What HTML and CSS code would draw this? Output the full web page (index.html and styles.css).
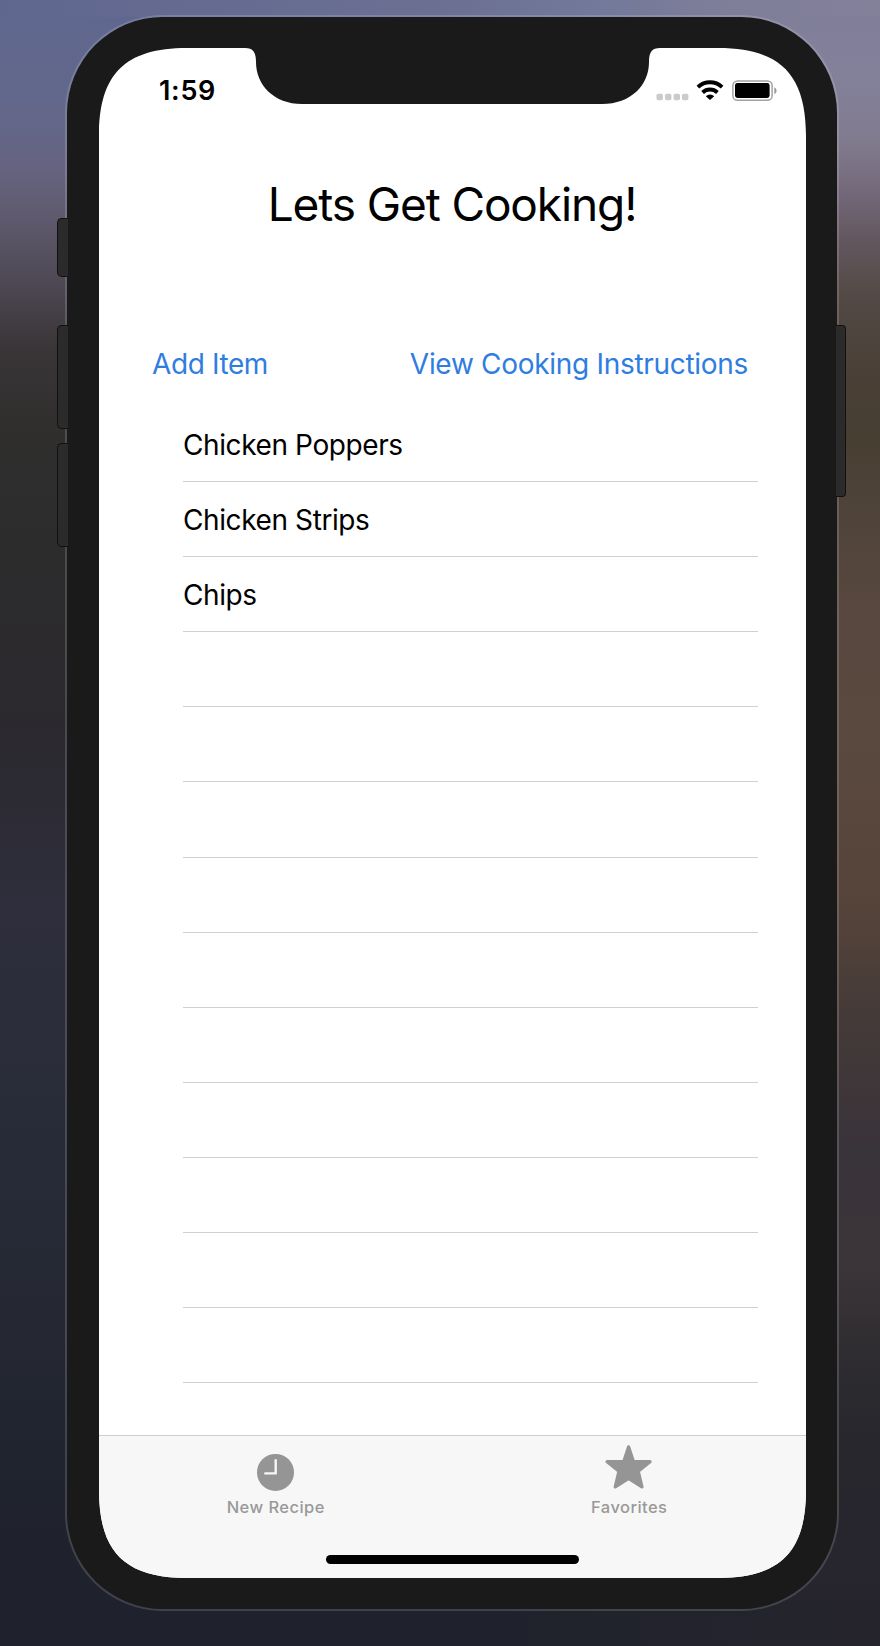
FILE: index.html
```html
<!DOCTYPE html>
<html lang="en">
<head>
<meta charset="utf-8">
<title>Lets Get Cooking!</title>
<link rel="stylesheet" href="styles.css">
</head>
<body>
<div class="desktop">
  <div class="phone">
    <span class="side-key mute"></span>
    <span class="side-key volume-up"></span>
    <span class="side-key volume-down"></span>
    <span class="side-key power"></span>
    <div class="screen">
      <header class="status-bar">
        <span class="time">1:59</span>
        <div class="indicators">
          <svg width="121" height="24" viewBox="0 0 121 24">
            <g fill="#cbcbcb">
              <rect x="0.5" y="15.8" width="6.4" height="6.4" rx="1.6"/>
              <rect x="9" y="15.8" width="6.4" height="6.4" rx="1.6"/>
              <rect x="17.6" y="15.8" width="6.4" height="6.4" rx="1.6"/>
              <rect x="26" y="15.8" width="6.4" height="6.4" rx="1.6"/>
            </g>
            <g fill="none" stroke="#000" stroke-width="3.9">
              <path d="M41.9 9.1a17.6 17.6 0 0 1 24.2 0"/>
              <path d="M46.6 14.5a10.8 10.8 0 0 1 14.8 0"/>
            </g>
            <path d="M54 22l-4.2-3.8a6.2 6.2 0 0 1 8.4 0z"/>
            <rect x="76.9" y="2.9" width="39.2" height="19.4" rx="4.6" fill="#fff" stroke="#a2a2a2" stroke-width="1.5"/>
            <rect x="79" y="5" width="34.6" height="15" rx="2.4"/>
            <path d="M118.3 9.2c3 1.4 3 5.6 0 7z" fill="#999"/>
          </svg>
        </div>
      </header>
      <main class="content">
        <h1 class="title">Lets Get Cooking!</h1>
        <div class="actions">
          <a class="action add">Add Item</a>
          <a class="action view">View Cooking Instructions</a>
        </div>
        <ul class="recipes">
          <li>Chicken Poppers</li>
          <li>Chicken Strips</li>
          <li>Chips</li>
          <li></li><li></li><li></li><li></li><li></li>
          <li></li><li></li><li></li><li></li><li></li>
        </ul>
      </main>
      <nav class="tab-bar">
        <div class="tab">
          <svg class="tab-icon" width="48" height="48" viewBox="0 0 48 48">
            <circle cx="23.5" cy="28.4" r="18.5" fill="#959595"/>
            <path d="M23.7 16.2v13.2h-10.4" fill="none" stroke="#f7f7f7" stroke-width="2.4" stroke-linecap="round" stroke-linejoin="round"/>
          </svg>
          <span class="tab-label">New Recipe</span>
        </div>
        <div class="tab">
          <svg class="tab-icon" width="48" height="48" viewBox="0 0 48 48">
            <path d="M23.6 2.9L28.4 17.8H45L33.2 27.3L36.9 42.8L23.6 34.3L10.3 42.8L14 27.3L2.2 17.8H18.8Z" fill="#959595" stroke="#959595" stroke-width="3.4" stroke-linejoin="round"/>
          </svg>
          <span class="tab-label">Favorites</span>
        </div>
        <span class="home-indicator"></span>
      </nav>
    </div>
  </div>
</div>
</body>
</html>
```
FILE: styles.css
```css
* { box-sizing: border-box; }
body { margin: 0; font-family: Inter, "Liberation Sans", sans-serif; color: #000; }

.desktop {
  width: 880px;
  height: 1646px;
  padding: 15px 0 0 65px;
  overflow: hidden;
  background:
    linear-gradient(90deg, #60678f 0, #6b7093 440px, #72799a 600px, #7e7e99 720px, #83809a 880px) 0 0 / 880px 17px no-repeat,
    linear-gradient(#1f222c, #1f222c) 70px 1600px / 420px 46px no-repeat,
    linear-gradient(90deg, #1f222c, #25242d 380px) 490px 1600px / 390px 46px no-repeat,
    linear-gradient(180deg, #60678f 0, #62688b 100px, #666380 170px, #5c5768 230px, #4b4650 290px, #393537 350px, #302f2e 420px, #2d2c2d 550px, #2b292e 720px, #2e2e3c 900px, #2c2d3b 1000px, #272b37 1150px, #252833 1340px, #20242e 1440px, #1f212c 1646px) 0 0 / 160px 1646px no-repeat,
    linear-gradient(180deg, #7f7e99 0, #83809a 80px, #817b8e 140px, #74697b 190px, #63575f 240px, #524944 300px, #493f36 380px, #483f33 440px, #50443a 520px, #59483f 620px, #5a493f 740px, #56443a 900px, #443a38 1020px, #39333a 1150px, #3b3539 1260px, #2e2c30 1360px, #27272d 1440px, #27252e 1560px, #25242d 1646px) 720px 0 / 160px 1646px no-repeat,
    #25252d;
}

.phone {
  position: relative;
  width: 774px;
  height: 1596px;
  padding: 31px 31px 31px 32px;
  border: 2px solid rgba(255, 255, 255, .15);
  border-radius: 98px;
  background: #1a1a1a;
  background-clip: padding-box;
}

.side-key {
  position: absolute;
  left: -10px;
  width: 11px;
  border: 1px solid #111;
  border-right: 0;
  border-radius: 5px 0 0 5px;
  background: #2b2b2b;
}
.mute { top: 201px; height: 59px; }
.volume-up { top: 308px; height: 104px; }
.volume-down { top: 426px; height: 104px; }
.power {
  left: auto;
  right: -9px;
  top: 308px;
  width: 10px;
  height: 172px;
  border: 1px solid #111;
  border-left: 0;
  border-radius: 0 4px 4px 0;
}

.screen {
  display: flex;
  flex-direction: column;
  width: 707px;
  height: 1530px;
  background: #fff;
  clip-path: path("M0 88C0 26 26 0 88 0H146C154 0 157 4 157 14C157 37 175 56 203 56H503C532 56 550 37 550 14C550 4 553 0 561 0H619C681 0 707 26 707 88V1442C707 1504 681 1530 619 1530H88C26 1530 0 1504 0 1442Z");
}

.status-bar {
  display: flex;
  justify-content: space-between;
  height: 90px;
  padding: 29px 29px 0 60px;
}
.time {
  font-size: 27px;
  font-weight: 600;
  line-height: 28px;
  letter-spacing: .7px;
}
.indicators svg { display: block; margin-top: 1px; }

.content { flex: 1; min-height: 0; }
.title {
  margin: 38px 1px 0 0;
  text-align: center;
  font-size: 46px;
  font-weight: 400;
  line-height: 56px;
  letter-spacing: -1.12px;
}
.actions {
  display: flex;
  justify-content: space-between;
  height: 36px;
  margin-top: 114px;
  padding: 0 58px 0 53px;
}
.action {
  color: #2f7de1;
  font-size: 28px;
  line-height: 36px;
  white-space: nowrap;
}
.add { letter-spacing: -.4px; }
.view { letter-spacing: -.3px; }
.recipes {
  margin: 25px 48px 0 84px;
  padding: 0;
  list-style: none;
}
.recipes li {
  height: 75.1px;
  border-bottom: 1px solid #d0d0d1;
  font-size: 28px;
  line-height: 76px;
  letter-spacing: -.4px;
}

.tab-bar {
  display: flex;
  flex-wrap: wrap;
  justify-content: center;
  align-content: flex-start;
  height: 143px;
  border-top: 1px solid #cdcdcd;
  background: #f7f7f7;
}
.tab {
  display: flex;
  flex-direction: column;
  align-items: center;
  width: 50%;
  height: 119px;
  padding-top: 8px;
}
.tab-icon { display: block; }
.tab-label {
  margin-top: 4px;
  color: #999;
  font-size: 16.5px;
  font-weight: 500;
  line-height: 22px;
  letter-spacing: .45px;
}
.home-indicator {
  width: 253px;
  height: 9px;
  border-radius: 5px;
  background: #000;
}
```
